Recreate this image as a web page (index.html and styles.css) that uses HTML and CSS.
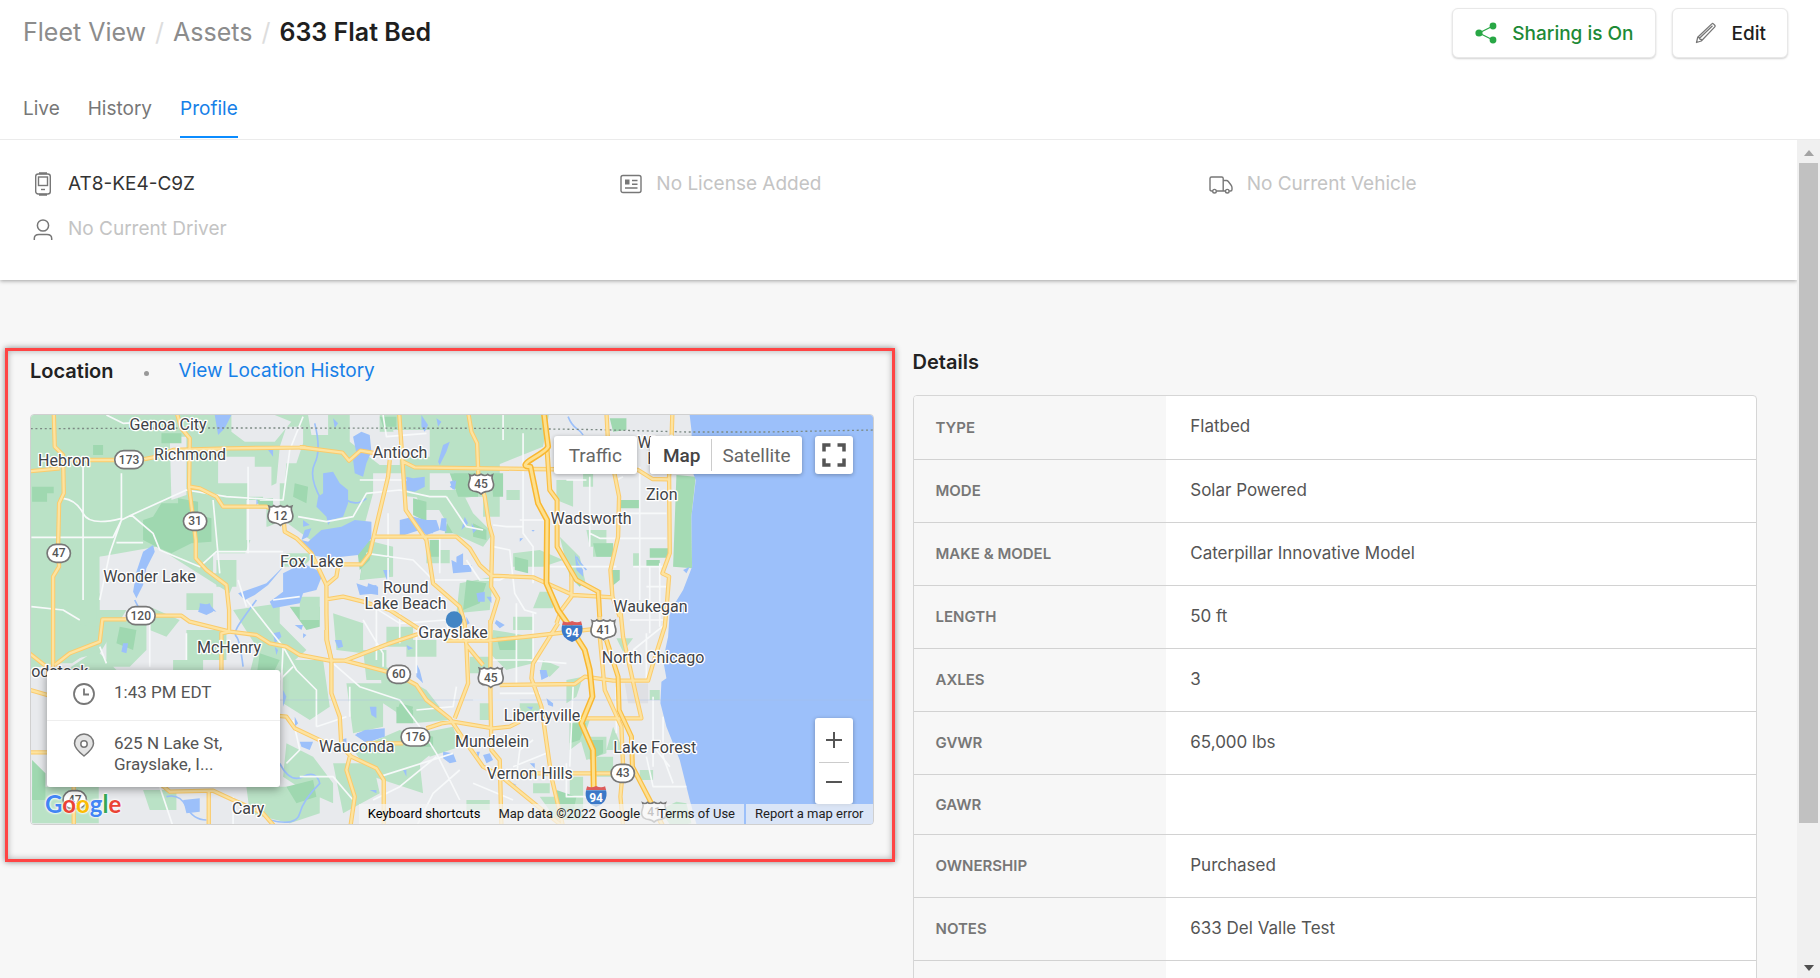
FILE: index.html
```html
<!DOCTYPE html>
<html lang="en">
<head>
<meta charset="utf-8">
<title>633 Flat Bed</title>
<link rel="stylesheet" href="styles.css">
</head>
<body>
<header class="header">
  <div class="header-top">
    <nav class="crumbs" aria-label="Breadcrumb">
      <a href="#">Fleet View</a><span class="slash">/</span><a href="#">Assets</a><span class="slash">/</span><h1>633 Flat Bed</h1>
    </nav>
    <div class="actions">
      <button class="btn btn-share" type="button">
        <svg width="22" height="22" viewBox="0 0 22 22" aria-hidden="true"><path d="M4 11 18 4M4 11l14 7" stroke="#28a745" stroke-width="1.3" fill="none"/><g fill="#28a745"><circle cx="4" cy="11" r="3.6"/><circle cx="18" cy="4" r="3.4"/><circle cx="18" cy="18" r="3.4"/></g></svg>
        Sharing is On
      </button>
      <button class="btn" type="button">
        <svg width="22" height="22" viewBox="0 0 22 22" fill="none" stroke="#777" stroke-width="1.3" stroke-linejoin="round" aria-hidden="true"><path d="M1.500 20.500l1.200-5.200L16.800 1.900q.8-.8 1.600 0l1.400 1.400q.8.800 0 1.600L6.300 19zM2.700 15.300l1.800.4.300 1.500 1.500.3.300 1.500M5 15.800 17.500 3.700"/></svg>
        Edit
      </button>
    </div>
  </div>
  <nav class="tabs" aria-label="Sections">
    <a href="#">Live</a>
    <a href="#">History</a>
    <a href="#" class="active" aria-current="page">Profile</a>
  </nav>
</header>

<div class="viewport">
  <main class="page">
    <section class="summary">
      <div class="fact known">
        <svg width="22" height="24" viewBox="0 0 22 24" fill="none" stroke="#777" stroke-width="1.400" aria-hidden="true"><rect x="3.700" y="2" width="14.600" height="20" rx="2.500"/><path d="M7 1.200h8M7 22.800h8" stroke-width="2"/><rect x="6.500" y="5" width="9" height="8.500"/><path d="M9 17.500h4"/></svg>
        <span>AT8-KE4-C9Z</span>
      </div>
      <div class="fact">
        <svg width="22" height="24" viewBox="0 0 22 24" fill="none" stroke="#777" stroke-width="1.400" aria-hidden="true"><rect x="1" y="3.500" width="20" height="17" rx="2"/><path d="M5 7.500h4.500v5H5z" fill="#777" stroke="none"/><path d="M12 8.500h5.500M12 12.300h5.500M5 16h12.500"/></svg>
        <span>No License Added</span>
      </div>
      <div class="fact">
        <svg width="24" height="24" viewBox="0 0 24 24" fill="none" stroke="#777" stroke-width="1.400" aria-hidden="true"><path d="M3.500 19H2.500Q1 19 1 17.500v-11Q1 5 2.500 5h10.200q1.500 0 1.500 1.500V19M7.500 19H16.500M14.200 8.500h3.300q1 0 1.800 1l2.500 3.200q1.200 1.500 1.200 3v1.800q0 1.500-1.500 1.500h-1.200"/><circle cx="5.500" cy="19.200" r="1.800"/><circle cx="18.300" cy="19.200" r="1.800"/></svg>
        <span>No Current Vehicle</span>
      </div>
      <div class="fact">
        <svg width="22" height="24" viewBox="0 0 22 24" fill="none" stroke="#777" stroke-width="1.500" aria-hidden="true"><circle cx="11" cy="8.500" r="5.600"/><path d="M2.300 23v-1.500Q2.300 17.500 7 17.500h8q4.700 0 4.700 4V23"/></svg>
        <span>No Current Driver</span>
      </div>
    </section>

    <div class="columns">
      <section class="location">
        <div class="location-head">
          <h2>Location</h2>
          <span class="dot"></span>
          <a href="#">View Location History</a>
        </div>
        <div class="map">
          <svg class="map-canvas" viewBox="93 1245 2526 1227" preserveAspectRatio="xMidYMid slice" role="img" aria-label="Map of Grayslake">
            <defs>
              <g id="roads">
                <g transform="translate(0 1020)">
                  <path d="M162 215 165 320 190 345 192 460 178 490 175 620 178 680 160 710V985M85 394 180 385M192 360H350M430 358 460 352 520 330 690 325 915 322 900 322M530 215 545 265 570 295 568 440 578 520 588 600V655L620 690 680 735 688 810V875L665 880V1000M570 440 600 445 650 470 670 500 800 500 850 520 855 575 890 595 935 640 980 735"/>
                </g>
                <g transform="translate(0 1800)">
                  <path d="M85 157 140 200M165 195 210 160 300 125 308 58H380M465 47H545L570 65 690 95 770 105 810 130 860 140 900 165 990 182M85 268 160 290M85 457H160M820 346 860 350 885 385 970 425M480 550 510 575 640 572 700 600 790 640 825 680M627 570V680M222 560V680"/>
                </g>
                <g transform="translate(900 1230)">
                  <path d="M0 112 20 114 128 128 148 152 182 122 240 132M298 5 308 150 318 300 380 390 400 520 480 590 495 640V670M310 155 345 172 690 177 1015 180 1058 207 1110 208M505 5 515 65 532 100 536 200 555 260 568 345 578 380 574 530 595 565 572 640M270 150 265 200 210 430 185 463H130M220 380H470L510 415 540 465 575 497 700 502 820 555 940 562M80 520V610L82 690 95 750M115 470 110 500 80 525M80 568 130 560 190 575 270 600 355 655M920 5 925 100 945 195 958 260 955 380 932 480 938 560 960 620M1118 5 1115 100 1108 200 1110 430 1088 490 1108 500 1100 600M815 480V560L785 600 770 640"/>
                </g>
                <g transform="translate(840 1830)">
                  <path d="M140 60V90L155 150V250L180 320 185 410 215 440 290 475 312 510V650M210 440 200 480 225 560 212 650M195 152 310 182 355 195 410 225 440 270 510 325 560 400 610 470 665 500 720 545 800 610 850 650M150 152H195L330 100 415 72M500 92H625L760 78 960 55M555 60 560 105 610 165M560 105 565 220 525 325M632 30V250L635 420 660 450 665 650M440 355 485 340 520 335 640 355 690 350 720 335M260 400H370M660 225 885 222 915 200 1000 212H1105L1120 160 1155 50 1160 0M835 40 760 160 755 205 785 290 815 500 850 650M720 490H1010M910 325H1085L1070 260 1030 80 1022 0M958 -60 960 80 975 240 1025 350 1030 470 1022 560 1030 650"/>
                </g>
              </g>
              <g id="highways">
                <path d="M1632 1235 1640 1300 1645 1340Q1642 1350 1600 1375T1592 1400L1615 1510 1642 1560 1640 1750 1675 1830 1710 1880 1755 1950 1770 2010 1778 2090 1745 2170 1780 2250 1782 2370"/>
              </g>
              <g id="arterials">
                <path d="M1642 1350 1650 1470 1672 1500V1640L1730 1740 1795 1775 1800 1850M1820 1920 1855 2030 1858 2130 1895 2210 1898 2300 1950 2400 1990 2480"/>
              </g>
              <path id="us-shield" d="M-34-26q8 4 14-2 8 7 20 0 12 7 20 0 6 6 14 2-3 8 1 18 6 16-3 26-10 6-18 6-8 2-14 7-6-5-14-7-10 0-18-6-9-10-3-26 4-10 1-18z"/>
            </defs>

            <rect class="urban" x="80" y="1230" width="2560" height="1260"/>
            <path class="park" d="M80 1230H1650L1630 1340 1480 1400 1510 1480 1340 1500 1120 1480 1090 1590 960 1640 850 1560 760 1600 690 1780 470 1640 300 1670V1830H380L300 1960 80 2010Z"/>
            <g transform="translate(0 1020)">
              <path class="urban" d="M510 290h50v175l-45 15zM695 225h130l50 20-50 60h-90l-40-30zM655 350h110v30h50v90h-70v-40h-90zM860 260h50v50l-20 60h-30l-10 130h-60v-50l40-20 10-110zM925 225h60v60h-50zM740 480h60v120h-60zM1050 225h90v50h60v100h-60l-90-70zM1180 270h110v80h-90zM300 650h190v90h150l60 70H480v-50H300zM760 560h90l60 60v180H700v-110h60zM640 640h120v60H640zM1120 400h90v70h-90zM1150 480h80v80h-90zM1290 400h90v50h-90zM990 660h120v60h100v90H990z"/>
              <path class="park" d="M840 430h90l30 70-50 60-70-20zM860 640h90l-40 40h-60zM650 660h60v80h-60zM560 760h80v50h-80zM1140 230h160v40h-160z"/>
              <path class="wood" d="M485 490h50v-15l60 10v40l40 10v70l-60 5-60 30-45-20-40-20v-60l30-10zM97 440h65v20h-20v25H97zM485 280h60v30h-60zM885 430l40 10-5 50-40-20zM770 475h50v30h-40zM1090 650l60 10-10 50-60 10zM1140 230h50v30h-40zM1345 530l40-10v60h-50zM280 315h30v30h-30z"/>
            </g>
            <g transform="translate(0 1800)">
              <path class="park" d="M97 0h90v70l120 10v50l-90 60H97zM180 0h110v60l-70 20zM320 60h120v90l-50 50h-70zM450 20l90 40-40 50-50-20zM560 90h120v90H560zM520 180h90v30h-90zM700 30l140-20v60l80 80-80 70h-90l20-80zM850 180h120l20 140-60 40-80-50zM290 150l60 60H200zM97 560h200v110H97zM430 570h100v60h-80zM740 560h220v80l-90 30-120-30zM860 430l80 40 60 80v60l-90-40-60-40z"/>
              <path class="park" d="M1000 40l90 30v90l-80-10zM1090 150h70v90h-60zM1040 250h110v130l-90 20zM1140 190l140 80 70 90-110 10-90-60zM1060 450l140-60 120 50-60 50 10 90-150-50zM1160 80h80v60h-80zM1220 120h90v50h-90z"/>
              <path class="wood" d="M360 80l50 10-10 60-50-20zM780 160l60 20-20 40-50 10zM870 20l90 0v60l-40 10zM97 480l40 40v80H97zM860 560l80-20 10 50-60 20zM1190 320l50 10v40h-50z"/>
            </g>
            <g transform="translate(900 1230)">
              <path class="park" d="M340 240h90v60h-60zM400 270l90-20 30 60 60 60-30 40-90-40zM200 390l80 20v90l-100 10zM380 420h70v40h-70zM450 160h150v160h-50v-60h-60zM480 520l100-20-10 100-100 10zM530 20h90v80h-90zM620 240h40v30h-40zM640 430l80-10 70 30-60 20h-90zM770 210h50v80l-50-20zM850 180h30v50h-30zM780 380l60 60 20 90-50-30zM860 360h60v50h-50zM880 400h60v40h-60zM1000 430h20v40h-20zM960 270h60v20h-60zM720 545h40v50h-60zM0 560h60v70H0z"/>
              <path class="wood" d="M340 265l40 10v60l-40-20zM450 190h85v70h-60zM575 190h35v70h-30zM390 390h30v50h-30zM520 340l40 20v30l-40-10zM500 510l60 10-20 60-50 20zM645 440l40 10v40l-40-10zM960 270h60v25h-60zM1050 415h58v28h-58zM1040 450h40v20h-40zM880 400h60v40h-50zM935 480h25v30l-25 20zM810 480l40 40-10 10-30-30zM170 400l50-10-10 60-30 30zM930 25h50v35l-40 5z"/>
              <path class="wood strip" d="M1130 195 1188 200 1175 320 1177 475 1120 470Z"/>
            </g>
            <g transform="translate(840 1830)">
              <path class="park" d="M640 60l120 20v80l-80 20-50-50zM570 140h60v50h-60zM790 150l50 20-30 30-30-10zM700 20h60v40h-60zM860 210l50-10-20 60-30 20zM720 280h60v30h-60zM870 340l60-10-20 60-40 30zM900 380h80v50l-60 20zM1000 350l30 70h-50zM780 560h130v70h-80zM870 500h40v60h-40zM950 440h50v60h-50zM760 520h50v30h-50zM420 370l100-20 20 60-90 30zM1080 480h40v30h-40zM1110 240h30v30h-30zM600 280h30v50h-30zM560 570h70v30h-70zM1010 85l50 0-30 40zM160 460l120 0 20 90-110 60zM1140 600l50-25 30 5 15 60-60 10z"/>
              <path class="wood" d="M650 80l60 0v40h-50zM870 340l50 0-20 50-30 10zM830 540l60 20-10 50-50-20zM930 390l40 0v40l-40 20zM420 370l40 10v30h-40zM360 280l40 10-10 40-40-20z"/>
              <path class="harbor" d="M1035 220h70v60h-60z"/>
            </g>

            <g class="water">
              <path d="M2068 1230 2075 1290 2080 1420 2088 1440 2075 1550 2077 1700 2050 1770 2010 1835 2005 1910 1990 1980 2000 2035 1985 2045 1982 2110 2000 2180 2040 2280 2070 2400 2095 2490H2640V1230Z"/>
              <g transform="translate(0 1020)">
                <path d="M645 225h50l-20 40-20 20zM970 400l30-5 20 35 25 20v40l-15 40-35 10-10 15-5-25-30-30 5-30 15-10zM905 600l20 5 40-35 60-10 40-20 50 5v50l-40 50-90 10-50-10zM850 700l60-30 60 30-20 50-40 10-10 30-80 15-10-20 40-30zM1060 290l25-15 25 10 5 50-15 35-10 40-25-10-5-40 10-20zM1220 410l20 5 35-5v30l-30 15-30-5zM1070 730l30 10 30-5v25l-50 5zM1200 540l40-10 40 10 30 0 10 30-40 15-20-15-30 10-30 10zM460 615l5 20-25 50-10 50-20 40-10-20 10-60 20-60zM800 730l20-20 40-40-55 65-40 30-30 15-20-20zM600 790l30 5 20 20-50-10zM1265 225l20 30-10 20-10-15zM1310 235l15 10-10 15zM805 330l15 0v20zM1000 235l15 15-10 15zM910 540l20 15-20 5zM905 600l10-30 20-5-10 25zM1350 440l20-20-5 30zM1370 650l20-10v50l-20-10zM770 470l5 20-5 5z"/>
                <path class="stream" d="M945 250q20 80 0 120t20 110M405 780l10 20M1040 480q30 20 60-5"/>
              </g>
              <g transform="translate(0 1800)">
                <path d="M600 20l30-10 10 25-20 10-25-10zM370 130l15 0-5 30-15-5zM820 100l20-5 5 15-20 20zM825 140l10 10-5 15zM1005 120l20 0 5 20-15 5zM1110 320l20 0v35l-15-10zM1070 400l50-10 30 20-50 20zM900 425l40 0-10 25-25-10zM550 600l50-5v40l-40 5zM885 350l10 20-10 10zM850 270l10 20-10 30zM910 100l10 5-10 10zM1250 190l10 20 10 40-20-20zM980 180l10 0 10 20zM885 75l25 0-5 15zM1110 570l20 0v10z"/>
                <path class="stream" d="M770 0q-30 40-50 70t-10 40 20 90M840 490q30 60 70 40t50 20q-50 50-60 90t-90 20M500 590q40-10 60 30t60 40"/>
              </g>
              <g transform="translate(900 1230)">
                <path d="M430 105l20-10-10 30-20 40-5-10zM370 340l30-10v40l-30 0zM425 325l15 0v40l-20-5zM300 340l40 10-20 20zM450 215l15-5-5 30zM455 450l30 15 30 0v20l-55 5zM495 320l10 20-20 20zM515 340l15 20-10 10zM530 550l25-5 0 30-20 0zM560 560l15 0v20zM205 520l30 10v25l-35-5zM250 480l20 0-5 40zM825 430l10 30 15 20v20l-20-20zM660 385l10 0-10 10zM695 360l10 0-5 5zM1150 480l20-10-10 20zM365 380l20-10v10zM300 140l20 0-10 10z"/>
                <path class="stream" d="M805 20q10 25 25 35t20 20M830 440q10 20 30 40"/>
              </g>
              <g transform="translate(840 1830)">
                <path d="M780 180l20 0 5 20-20 10zM650 30l25 15-15 10-15-15zM740 290l20 0-5 10zM800 265l20 15v10l-15-5zM610 435l20-5 10 20-20 10zM490 425l30 5 10 25-20 5-20-15zM370 480l10 0v20zM180 390l20-5v20zM380 105l20 10-15 5zM560 20l10 20-10 5zM225 375l30-15 60-5v25l-60 15zM590 425l10 0-5 20zM700 520l10 5-10 5zM750 460l15 0v15z"/>
              </g>
            </g>

            <g class="minor">
              <path d="M250 1380V1800M365 1420V1560L330 1660 300 1800M95 1612H340L365 1560 395 1545 560 1470 680 1490 840 1500M190 1495Q230 1500 250 1540T365 1555M395 1545 460 1600 480 1650 600 1700 650 1655H850M350 1628H430M640 1500 660 1720M745 1400V1660M320 1245 370 1270 460 1265M910 1250 870 1350 850 1500 780 1500M895 1550 980 1565 1060 1550 1100 1480 1200 1470 1290 1490 1340 1490M1080 1440H1220M1150 1245 1160 1310 1280 1300M1165 1540V1740M715 1740 740 1820M820 1800 900 1790M95 1820 190 1830 240 1860M300 1940 320 1990M450 1860V2000M740 1800 850 1940 840 2150M560 1980 560 1900M1100 1660 1240 1680 1300 1740 1400 1740M1340 1490 1400 1580 1450 1590M1320 1610V1720M1400 1680 1440 1740H1500L1540 1720M1510 1245V1320M1570 1300V1600L1600 1640V1750M1480 1575 1520 1580H1570M1480 1640 1530 1650 1545 1780 1575 1830 1610 1840M1770 1430V1640M1700 1440H1760M1870 1430 1850 1440M1860 1540H2000M1770 1600 1800 1615H2000M1920 1400V1800M1640 1560H1560M1900 1700H1990M1940 1760H2000M1890 1860H1990M1950 1700V1900M1980 1690V1880M1650 1700H1850"/>
              <path d="M850 1940 890 2010 950 2070V2180M950 2180 1040 2150M1000 1990 1080 2060 1200 2100 1260 2180 1310 2260 1380 2400M1090 1860 1150 1960V2000M1120 1820 1200 1870 1340 1860 1350 1920M880 2160 900 2250 860 2290M1310 2270 1200 2360 1120 2400M1380 2310 1300 2380 1250 2480M1420 2350 1540 2400M1050 2150V2060M1130 1820V1980M1480 1980H1600V1840M1550 1810V2060M1420 2100H1560M1580 1980 1700 1990M1370 2060 1360 2120 1250 2130M1720 2060 1710 2300M1700 2290V2390H1780M1940 1900V2040M2000 1870 1900 1950M1960 2090V2300M1970 2250 2010 2300M1940 2270 1960 2360H2060M1990 2150V2270L2020 2350M1250 1880V2020M1600 2220 1560 2250 1550 2330M1540 2300 1640 2260M1850 2060V2200M1500 2080H1620M1200 1840V1930M900 2330 1000 2330 1060 2400M700 2390V2480M480 2360 520 2480M1140 2330 1360 2260M880 2000 820 2060"/>
            </g>
            <path class="border" d="M93 1286 660 1284 860 1284 1500 1285 1800 1289 2060 1296 2300 1296 2620 1290"/>
            <path class="seam" d="M840 2100H2640"/>

            <use href="#roads" class="road-case"/><use href="#roads" class="road-fill"/>
            <use href="#arterials" class="art-case"/><use href="#arterials" class="art-fill"/>
            <use href="#highways" class="hwy-case"/><use href="#highways" class="hwy-fill"/>

            <g class="pill">
              <rect x="345" y="1352" width="86" height="54" rx="27"/><rect x="551" y="1537" width="70" height="54" rx="27"/><rect x="142" y="1633" width="70" height="54" rx="27"/><rect x="380" y="1820" width="86" height="54" rx="27"/><rect x="1162" y="1996" width="70" height="54" rx="27"/><rect x="1204" y="2184" width="86" height="54" rx="27"/><rect x="1834" y="2293" width="70" height="54" rx="27"/><rect x="190" y="2372" width="70" height="54" rx="27"/>
              <use href="#us-shield" x="842" y="1545"/><use href="#us-shield" x="1444" y="1451"/><use href="#us-shield" x="1811" y="1888"/><use href="#us-shield" x="1473" y="2031"/><use href="#us-shield" x="1963" y="2435"/>
            </g>
            <g>
              <path class="i-blue" d="M1687 1876h60q5 20-6 34-9 10-24 16-15-6-24-16-11-14-6-34z"/><path class="i-red" d="M1690 1864q13 6 27-1 14 7 27 1l3 11h-60z"/>
              <path class="i-blue" d="M1759 2371h60q5 20-6 34-9 10-24 16-15-6-24-16-11-14-6-34z"/><path class="i-red" d="M1762 2359q13 6 27-1 14 7 27 1l3 11h-60z"/>
            </g>
            <g class="num">
              <text x="388" y="1391">173</text><text x="586" y="1576">31</text><text x="177" y="1672">47</text><text x="423" y="1859">120</text><text x="1197" y="2035">60</text><text x="1247" y="2223">176</text><text x="1869" y="2332">43</text><text x="225" y="2411">47</text>
              <text x="842" y="1559">12</text><text x="1444" y="1465">45</text><text x="1811" y="1902">41</text><text x="1473" y="2045">45</text><text x="1963" y="2449">41</text>
              <text class="inum" x="1717" y="1910">94</text><text class="inum" x="1789" y="2405">94</text>
            </g>
            <g class="town">
              <text x="505" y="1290">Genoa City</text><text x="193" y="1397">Hebron</text><text x="571" y="1381">Richmond</text><text x="1201" y="1375">Antioch</text><text x="449" y="1747">Wonder Lake</text><text x="936" y="1702">Fox Lake</text><text x="1218" y="1778">Round</text><text x="1217" y="1827">Lake Beach</text><text x="1774" y="1572">Wadsworth</text><text x="1986" y="1500">Zion</text><text x="1952" y="1836">Waukegan</text><text x="2010" y="1344">Winthrop</text><text x="2016" y="1393">Harbor</text><text x="1960" y="1990">North Chicago</text><text x="1360" y="1914">Grayslake</text><text x="688" y="1958">McHenry</text><text x="180" y="2032">odstock</text><text x="1627" y="2162">Libertyville</text><text x="1477" y="2242">Mundelein</text><text x="1071" y="2257">Wauconda</text><text x="1590" y="2338">Vernon Hills</text><text x="1965" y="2260">Lake Forest</text><text x="745" y="2443">Cary</text>
            </g>
            <circle cx="1363" cy="1859" r="25" fill="#4285c4"/>
          </svg>

          <div class="map-top">
            <button class="map-btn" type="button">Traffic</button>
            <div class="map-types">
              <button class="map-btn selected" type="button">Map</button>
              <button class="map-btn" type="button">Satellite</button>
            </div>
            <button class="map-btn square" type="button" aria-label="Toggle fullscreen">
              <svg width="24" height="24" viewBox="0 0 24 24" fill="none" stroke="#555" stroke-width="3.500" aria-hidden="true"><path d="M2 8.500V2h6.500M15.500 2H22v6.500M22 15.500V22h-6.500M8.500 22H2v-6.500"/></svg>
            </button>
          </div>

          <div class="place">
            <div class="place-row">
              <svg width="24" height="24" viewBox="0 0 24 24" fill="none" stroke="#777" stroke-width="1.800" aria-hidden="true"><circle cx="12" cy="12" r="10"/><path d="M12 6.500V12.500h5"/></svg>
              <span>1:43 PM EDT</span>
            </div>
            <div class="place-row">
              <svg width="24" height="24" viewBox="0 0 24 24" fill="#e4e4e4" stroke="#777" stroke-width="1.500" aria-hidden="true"><path d="M12 23Q2.500 15.500 2.500 10.500a9.500 9.500 0 0 1 19 0Q21.500 15.500 12 23z"/><circle cx="12" cy="11" r="3.200" fill="#fff"/></svg>
              <span>625 N Lake St,<br>Grayslake, I...</span>
            </div>
          </div>

          <div class="google" aria-label="Google"><span class="g-blue">G</span><span class="g-red">o</span><span class="g-yellow">o</span><span class="g-blue">g</span><span class="g-green">l</span><span class="g-red">e</span></div>

          <div class="zoom">
            <button type="button" aria-label="Zoom in"><svg width="16" height="16" viewBox="0 0 16 16" stroke="#555" stroke-width="2" aria-hidden="true"><path d="M0 8h16M8 0v16"/></svg></button>
            <button type="button" aria-label="Zoom out"><svg width="16" height="16" viewBox="0 0 16 16" stroke="#555" stroke-width="2" aria-hidden="true"><path d="M0 8h16"/></svg></button>
          </div>

          <div class="legal">
            <button type="button">Keyboard shortcuts</button>
            <span>Map data ©2022 Google</span>
            <a href="#">Terms of Use</a>
            <a href="#" class="report">Report a map error</a>
          </div>
        </div>
      </section>

      <section class="details">
        <h2>Details</h2>
        <div class="table-box">
          <table>
            <tbody>
              <tr><th scope="row">TYPE</th><td>Flatbed</td></tr>
              <tr><th scope="row">MODE</th><td>Solar Powered</td></tr>
              <tr><th scope="row">MAKE &amp; MODEL</th><td>Caterpillar Innovative Model</td></tr>
              <tr><th scope="row">LENGTH</th><td>50 ft</td></tr>
              <tr><th scope="row">AXLES</th><td>3</td></tr>
              <tr><th scope="row">GVWR</th><td>65,000 lbs</td></tr>
              <tr class="empty"><th scope="row">GAWR</th><td></td></tr>
              <tr><th scope="row">OWNERSHIP</th><td>Purchased</td></tr>
              <tr><th scope="row">NOTES</th><td>633 Del Valle Test</td></tr>
              <tr><th></th><td></td></tr>
            </tbody>
          </table>
        </div>
      </section>
    </div>
  </main>
  <div class="scrollbar" aria-hidden="true">
    <svg class="arrow" width="10" height="6" viewBox="0 0 10 6"><path d="M0 6 5 0l5 6z" fill="#a3a3a3"/></svg>
    <div class="track"><div class="thumb"></div></div>
    <svg class="arrow" width="10" height="6" viewBox="0 0 10 6"><path d="M0 0h10L5 6z" fill="#505050"/></svg>
  </div>
</div>
</body>
</html>
```
FILE: styles.css
```css
* { box-sizing: border-box; }

body {
  margin: 0;
  height: 100vh;
  overflow: hidden;
  display: flex;
  flex-direction: column;
  background: #f7f7f7;
  color: #222;
  font-family: Inter, "Liberation Sans", sans-serif;
}

a { color: inherit; text-decoration: none; }
h1, h2 { margin: 0; font-weight: 600; }
button { font: inherit; cursor: pointer; }
svg { flex: none; display: block; }

/* Header */
.header {
  flex: none;
  background: #fff;
  border-bottom: 1px solid #ebebeb;
}
.header-top {
  display: flex;
  justify-content: space-between;
  padding: 8px 32px 0 23px;
}
.crumbs {
  display: flex;
  align-items: center;
  height: 48px;
  font-size: 25px;
  color: #8c8c8c;
}
.crumbs h1 { font-size: 25px; color: #1f1f1f; }
.slash { padding: 0 9px; color: #ddd; }

.actions { display: flex; gap: 16px; }
.btn {
  display: flex;
  align-items: center;
  gap: 15px;
  height: 50px;
  padding: 0 21px 0 22px;
  background: #fff;
  border: 1px solid #e8e8e8;
  border-radius: 6px;
  box-shadow: 0 1px 2px rgba(0, 0, 0, .18);
  font-size: 19px;
  font-weight: 500;
  color: #1f1f1f;
}
.btn-share { color: #1d8a36; }

.tabs {
  display: flex;
  gap: 28px;
  padding: 28px 23px 1px;
  font-size: 19px;
  line-height: 46px;
  color: #777;
}
.tabs a { height: 52px; border-bottom: 2px solid transparent; }
.tabs .active { color: #1680e8; border-color: #0b8cff; }

/* Scrolling area */
.viewport { flex: 1; min-height: 0; display: flex; }
.page { flex: 1; min-width: 0; overflow: hidden; }

.scrollbar {
  width: 23px;
  display: flex;
  flex-direction: column;
  align-items: center;
  justify-content: space-between;
  padding: 10px 0 7px;
  background: #f0f0f0;
}
.track { flex: 1; width: 19px; padding: 7px 0; }
.thumb { height: 83%; background: #c1c1c1; }

.summary {
  display: grid;
  grid-template-columns: repeat(3, 1fr);
  grid-auto-rows: 45px;
  padding: 21px 0 29px 32px;
  background: #fff;
  box-shadow: 0 1px 4px rgba(0, 0, 0, .35);
  font-size: 19px;
  color: #c4c4c4;
}
.fact { display: flex; align-items: center; gap: 14px; }
.known { color: #333; }

.columns {
  display: grid;
  grid-template-columns: 1fr 1fr;
  align-items: start;
  gap: 38px;
  padding: 68px 40px 0 30px;
}
.columns h2 { font-size: 20px; line-height: 24px; }

/* Location */
.location {
  margin: 0 -20px 0 -25px;
  padding: 8px 18px 34px 22px;
  border: 3px solid #ff4444;
  box-shadow: 0 0 6px rgba(0, 0, 0, .45), inset 0 0 6px rgba(0, 0, 0, .3);
}
.location-head {
  display: flex;
  align-items: center;
  font-size: 19px;
  line-height: 24px;
  margin-bottom: 31px;
}
.location-head a { color: #1680e8; }
.dot { width: 5px; height: 5px; margin: 4px 30px 0; border-radius: 50%; background: #999; }

.map {
  position: relative;
  height: 411px;
  overflow: hidden;
  border: 1px solid #d0d0d0;
  border-radius: 4px;
  font-family: Roboto, "Liberation Sans", sans-serif;
}
.map-canvas { width: 100%; height: 100%; }
.urban { fill: #e8eaed; }
.park { fill: #bae2c6; }
.wood { fill: #9fd8b0; }
.strip { fill: #a5dbb4; }
.harbor { fill: #dfe0e4; }
.water path { fill: #9cc0fa; }
.water .stream { fill: none; stroke: #9cc0fa; stroke-width: 5; }
.minor { fill: none; stroke: #f7f9fa; stroke-width: 5; stroke-linejoin: round; }
.border { fill: none; stroke: #7c8a84; stroke-width: 4; stroke-dasharray: 6 8; }
.seam { stroke: #a9c0e4; stroke-width: 2; opacity: .6; }
.road-case, .road-fill, .art-case, .art-fill, .hwy-case, .hwy-fill { fill: none; stroke-linejoin: round; }
.road-case { stroke: #fbcb6b; stroke-width: 13; }
.road-fill { stroke: #fde3a0; stroke-width: 7; }
.art-case { stroke: #fabf45; stroke-width: 15; }
.art-fill { stroke: #fddf93; stroke-width: 8; }
.hwy-case { stroke: #f9b730; stroke-width: 18; }
.hwy-fill { stroke: #fde08e; stroke-width: 9; }
.pill { fill: #fff; stroke: #777; stroke-width: 5; }
.i-blue { fill: #3b78c8; }
.i-red { fill: #dc5c5c; }
.num { font-size: 36px; font-weight: 500; fill: #555; text-anchor: middle; }
.inum { font-weight: 700; fill: #fff; }
.town {
  font-size: 48px;
  fill: #3f4347;
  text-anchor: middle;
  stroke: #fff;
  stroke-width: 8;
  stroke-linejoin: round;
  paint-order: stroke;
}

.map-top {
  position: absolute;
  top: 21px;
  right: 20px;
  display: flex;
  gap: 13px;
}
.map-btn {
  height: 38px;
  padding: 0 15px;
  border: 0;
  border-radius: 3px;
  background: #fff;
  font-size: 19px;
  color: #666;
}
.map-top > * { box-shadow: 0 1px 4px rgba(0, 0, 0, .3); }
.map-types { display: flex; align-items: center; border-radius: 3px; background: #fff; }
.map-types .map-btn { padding: 0 11px 0 13px; }
.map-types .map-btn + .map-btn { height: 32px; padding: 0 11px 0 10px; border-left: 1px solid #ccc; border-radius: 0; }
.map-types .selected { font-weight: 500; color: #444; }
.map-btn.square { width: 38px; padding: 0 7px; }

.place {
  position: absolute;
  left: 16px;
  bottom: 37px;
  width: 233px;
  background: #fff;
  border-radius: 3px;
  box-shadow: 0 2px 10px rgba(0, 0, 0, .4);
  font-size: 17px;
  line-height: 21px;
  color: #555;
}
.place-row { display: flex; gap: 18px; padding: 12px 10px 12px 25px; }
.place-row:first-child { padding-bottom: 14px; border-bottom: 1px solid #eee; }

.google {
  position: absolute;
  left: 14px;
  bottom: 4px;
  font: 24px/32px Lato, "Open Sans", sans-serif;
  font-weight: 700;
  text-shadow: 0 0 2px #fff, 0 0 2px #fff, 0 0 3px #fff;
}
.g-blue { color: #4285f4; }
.g-red { color: #ea4335; }
.g-yellow { color: #fbbc04; }
.g-green { color: #34a853; }

.zoom {
  position: absolute;
  right: 20px;
  bottom: 20px;
  display: flex;
  flex-direction: column;
  width: 38px;
  padding: 0 4px;
  background: #fff;
  border-radius: 3px;
  box-shadow: 0 1px 4px rgba(0, 0, 0, .3);
}
.zoom button {
  display: flex;
  justify-content: center;
  align-items: center;
  height: 44px;
  padding: 0;
  border: 0;
  background: none;
}
.zoom button + button { height: 42px; padding-bottom: 4px; border-top: 1px solid #ccc; }

.legal {
  position: absolute;
  right: 0;
  bottom: 0;
  display: flex;
  font-size: 13px;
  line-height: 20px;
  color: #222;
}
.legal > * { padding: 0 9px; border: 0; background: rgba(245, 245, 245, .7); }
.legal .report { margin-left: 2px; }

/* Details */
.details { padding-top: 2px; }
.details h2 { margin-bottom: 21px; }
.table-box {
  border: 1px solid #d6d6d6;
  border-radius: 4px;
  overflow: hidden;
  background: #fff;
}
table { width: 100%; border-collapse: collapse; }
tr { height: 63px; border-bottom: 1px solid #d2d2d2; }
tr.empty { height: 60px; }
th {
  width: 30%;
  padding: 0 22px;
  background: #f7f7f7;
  text-align: left;
  font-size: 15px;
  font-weight: 600;
  color: #777;
}
td { padding: 0 24px 2px; font-size: 17px; color: #555; }
```
